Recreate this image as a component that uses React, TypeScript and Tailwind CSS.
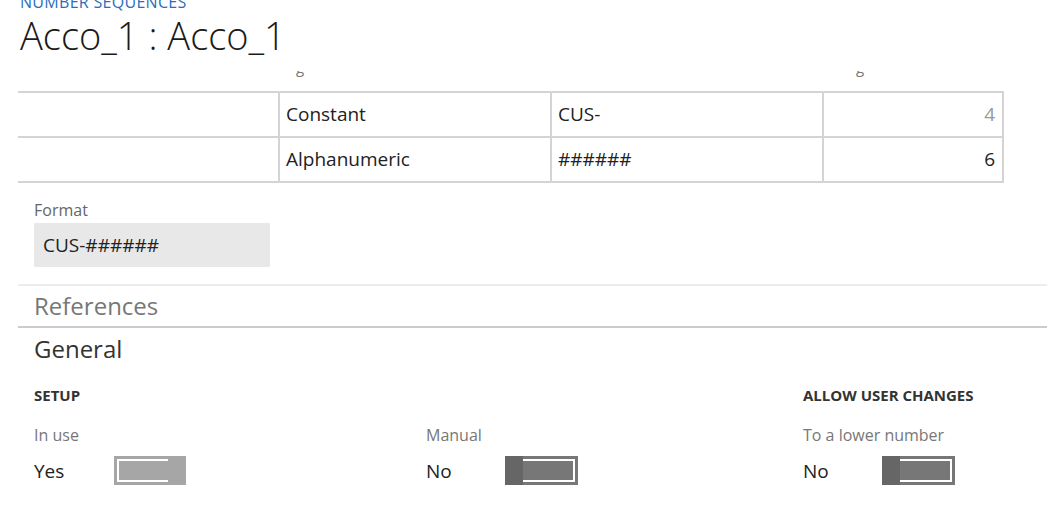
import React from "react";

const font = { fontFamily: '"Open Sans", "Noto Sans", Arial, sans-serif' };

const Toggle = (props: { on: boolean }) => {
  if (props.on) {
    return (
      <div className="flex h-[29px] w-[72px] items-stretch bg-[#a6a6a6] p-[3px] pr-[18px]">
        <div className="flex-1 border-2 border-r-0 border-white" />
      </div>
    );
  }
  return (
    <div className="flex h-[29px] w-[73px] items-stretch bg-[#777777]">
      <div className="w-[18px] bg-[#666666]" />
      <div className="flex flex-1 py-[3px] pr-[3px]">
        <div className="flex-1 border-2 border-l-0 border-white" />
      </div>
    </div>
  );
};

const Field = (props: { label: string; value: string; on: boolean; gap: string }) => {
  return (
    <div className="flex flex-col">
      <div className="text-[16px] leading-[20px] text-[#777]">{props.label}</div>
      <div className="mt-[9px] flex items-center">
        <div className={`${props.gap} pt-[2px] text-[19px] leading-[30px] text-[#222]`}>{props.value}</div>
        <Toggle on={props.on} />
      </div>
    </div>
  );
};

const cell = "flex items-center border-l-2 border-[#d4d4d4] pl-[6px]";

export default function App() {
  return (
    <div className="h-[509px] w-[1047px] overflow-hidden bg-white" style={font}>
      <div className="pl-[20px]">
        <div className="-mt-[8px] text-[16px] leading-[20px] tracking-[0.3px] text-[#2a6ebb]">NUMBER SEQUENCES</div>
        <div className="mt-[-1px] text-[38px] font-light leading-[48px] text-[#1a1a1a]">Acco_1 : Acco_1</div>
      </div>

      {/* column headers scrolled out of view, only descenders peek through */}
      <div className="mt-[12px] mb-[14px] ml-[18px] h-[6px] overflow-hidden">
        <div className="relative -mt-[14px] h-[20px] text-[15px] leading-[20px] text-[#777]">
          <span className="absolute left-[278px]">g</span>
          <span className="absolute left-[838px]">g</span>
        </div>
      </div>

      <div className="ml-[18px] w-[986px] border-t-2 border-[#d4d4d4] text-[19px] text-[#222]">
        <div className="grid h-[45px] grid-cols-[260px_272px_272px_182px] border-b-2 border-[#d4d4d4]">
          <div />
          <div className={cell}>Constant</div>
          <div className={cell}>CUS-</div>
          <div className="flex items-center justify-end border-x-2 border-[#d4d4d4] pr-[7px] text-[#999]">4</div>
        </div>
        <div className="grid h-[45px] grid-cols-[260px_272px_272px_182px] border-b-2 border-[#d4d4d4]">
          <div />
          <div className={cell}>Alphanumeric</div>
          <div className={cell}>######</div>
          <div className="flex items-center justify-end border-x-2 border-[#d4d4d4] pr-[7px]">6</div>
        </div>
      </div>

      <div className="mt-[16px] pl-[34px]">
        <div className="text-[16px] leading-[22px] text-[#666]">Format</div>
        <div className="mt-[2px] flex h-[44px] w-[236px] items-center bg-[#e8e8e8] pl-[9px] text-[19px] text-[#222]">
          CUS-######
        </div>
      </div>

      <div className="mt-[17px] ml-[18px] border-t-2 border-[#ededed]">
        <div className="pl-[16px] text-[24px] leading-[40px] text-[#777]">References</div>
      </div>
      <div className="ml-[18px] border-t-2 border-[#cccccc]">
        <div className="pl-[16px] text-[24px] leading-[42px] text-[#333]">General</div>
      </div>

      <div className="mt-[15px] grid grid-cols-[392px_377px_auto] pl-[34px]">
        <div className="col-span-2 text-[15px] font-bold leading-[20px] text-[#333]">SETUP</div>
        <div className="text-[15px] font-bold leading-[20px] text-[#333]">ALLOW USER CHANGES</div>
        <div className="mt-[20px]">
          <Field label="In use" value="Yes" on={true} gap="w-[80px]" />
        </div>
        <div className="mt-[20px]">
          <Field label="Manual" value="No" on={false} gap="w-[79px]" />
        </div>
        <div className="mt-[20px]">
          <Field label="To a lower number" value="No" on={false} gap="w-[79px]" />
        </div>
      </div>
    </div>
  );
}
